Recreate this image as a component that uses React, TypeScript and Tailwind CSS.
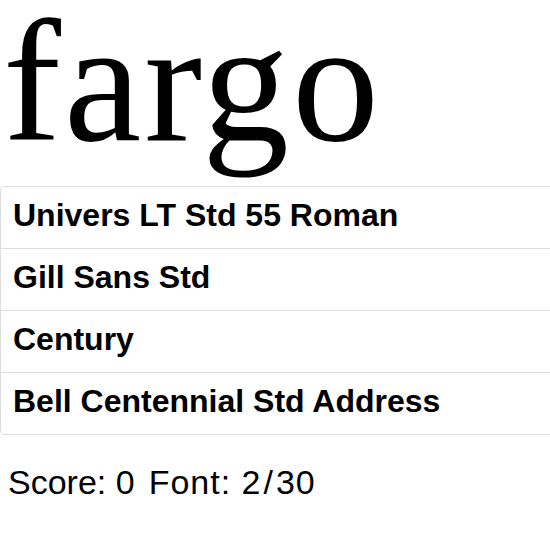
import React from 'react';

const fonts = [
  'Univers LT Std 55 Roman',
  'Gill Sans Std',
  'Century',
  'Bell Centennial Std Address',
];

export default function App() {
  return (
    <div className="w-[550px] overflow-hidden bg-white text-black font-['Liberation_Sans',Arial,sans-serif]">
      <div className="h-[186px] pl-[3px] text-[174px] leading-[164px] tracking-[3px] font-['Liberation_Serif',serif]">
        fargo
      </div>
      <div className="w-[560px] rounded border border-[#dddddd] divide-y divide-[#dddddd]">
        {fonts.map((name) => (
          <div
            key={name}
            className="box-content h-[51px] pt-[10px] px-3 text-[32px] leading-[37px] font-bold"
          >
            {name}
          </div>
        ))}
      </div>
      <div className="mt-[27px] pl-[8px] flex gap-[14px] text-[34px] leading-[40px]">
        <span>Score: 0</span>
        <span className="tracking-[1px]">
          Font: 2<span className="px-[2px]">/</span>30
        </span>
      </div>
    </div>
  );
}
